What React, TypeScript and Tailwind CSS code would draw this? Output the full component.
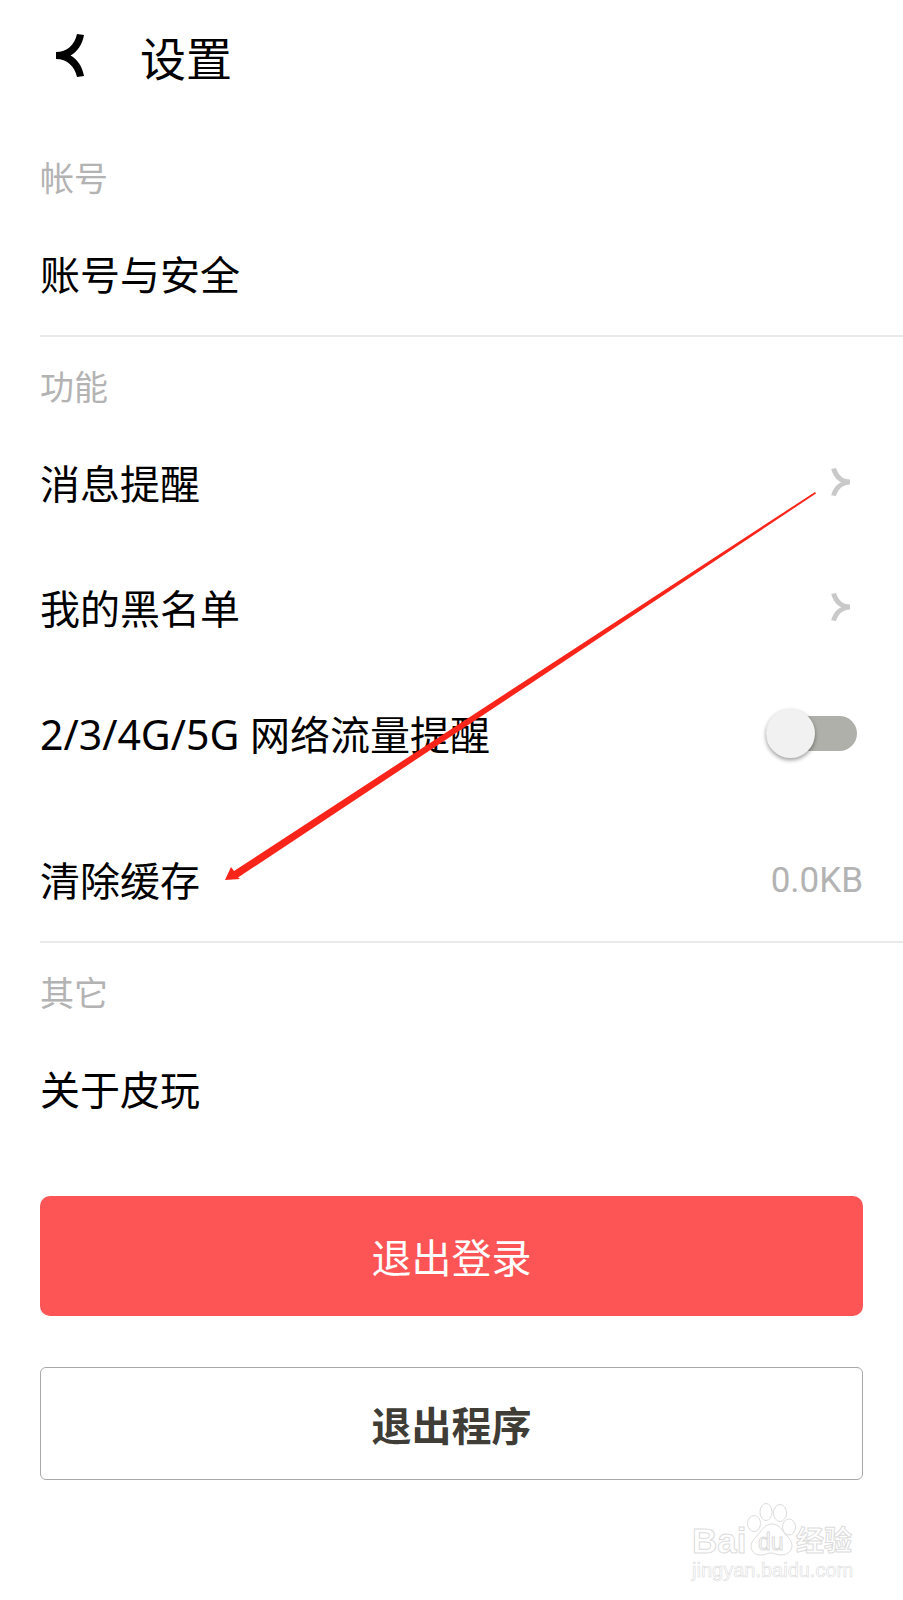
import React, { useState } from "react"

function BackIcon() {
  return (
    <svg width="28" height="44" viewBox="0 0 28 44" fill="#000" aria-hidden="true">
      <path d="M21 0L28 1C26.5 10 21.5 18 14.5 21.5C21.5 25 26.5 33 28 42L21 43C18.5 32 11 25 0 25V18C11 18 18.5 11 21 0Z" />
    </svg>
  )
}

function ArrowIcon() {
  return (
    <svg width="19" height="28" viewBox="0 0 19 28" fill="#c9c9c9" aria-hidden="true">
      <path d="M0.2 1L5 0C7 6.5 11.5 11.6 19 11.6V16.4C11.5 16.4 7 21.5 5 28L0.2 27.2C2 21 5.5 16 10.5 14.2C5.5 12.4 2 7.4 0.2 1Z" />
    </svg>
  )
}

function SectionTitle({ children }: { children: React.ReactNode }) {
  return (
    <h2 className="flex h-[82px] items-center pt-4 text-[34px] leading-none text-[#b3b3b3]">
      {children}
    </h2>
  )
}

const rowClass = "flex h-[125px] w-full items-center justify-between text-left text-[40px] leading-none text-black"

function Row({ label, children }: { label: string; children?: React.ReactNode }) {
  return (
    <button type="button" className={rowClass}>
      <span>{label}</span>
      {children}
    </button>
  )
}

// Guide arrow pointing at the clear cache row
function GuideArrow() {
  return (
    <svg
      className="pointer-events-none absolute top-[492px] left-[225px]"
      width="591"
      height="390"
      viewBox="0 0 591 390"
      fill="#f9241a"
      aria-hidden="true"
    >
      <path d="M590 0L591 1.5L305 192L13 385.5L15 387L0 388L6 375L9 379L303 187Z" />
    </svg>
  )
}

function Watermark() {
  return (
    <svg width="166" height="84" viewBox="0 0 166 84" fill="#fff" stroke="#dcdcdc" strokeWidth="1" className="font-['Liberation_Sans','Noto_Sans_CJK_SC',sans-serif]">
      <text x="2" y="53" fontSize="35" fontWeight="700">Bai</text>
      <ellipse cx="64" cy="23.5" rx="6.5" ry="8" />
      <ellipse cx="76" cy="12" rx="6" ry="8.5" />
      <ellipse cx="90" cy="13" rx="6.5" ry="8.5" />
      <ellipse cx="99" cy="27" rx="6.5" ry="8" />
      <path d="M82 24C90 24 92 31 97 36C106 44 102 55 91 55C86 55 85 53 81 53C77 53 76 55 71 55C60 55 58 44 66 37C72 31 74 24 82 24Z" />
      <text x="68" y="50" fontSize="23">du</text>
      <text x="106" y="51" fontSize="28" fontWeight="700">经验</text>
      <text x="2" y="77" fontSize="20" strokeWidth="0.6">jingyan.baidu.com</text>
    </svg>
  )
}

function App() {
  const [remind, setRemind] = useState(false)

  return (
    <main className="relative min-h-screen overflow-x-hidden bg-white pl-10 font-['Noto_Sans_CJK_SC',sans-serif]">
      <header className="flex h-32 items-center gap-14 pb-4 pl-4">
        <button type="button" aria-label="返回">
          <BackIcon />
        </button>
        <h1 className="text-[46px] leading-none text-black">设置</h1>
      </header>

      <section className="border-b-2 border-[#e9e9e9]">
        <SectionTitle>帐号</SectionTitle>
        <Row label="账号与安全" />
      </section>

      <section className="border-b-2 border-[#e9e9e9]">
        <SectionTitle>功能</SectionTitle>
        <div className="pr-[53px]">
          <Row label="消息提醒">
            <ArrowIcon />
          </Row>
          <Row label="我的黑名单">
            <ArrowIcon />
          </Row>
        </div>
        <div className="pt-0.5 pr-[46px] pb-5">
          <label className={rowClass}>
            <span>
              <span className="font-['Noto_Sans',sans-serif] text-[41px]">2/3/4G/5G </span>
              网络流量提醒
            </span>
            <input
              type="checkbox"
              role="switch"
              checked={remind}
              onChange={(e) => setRemind(e.target.checked)}
              className="flex h-[35px] w-[91px] appearance-none items-center rounded-full bg-[#b0b0ab] before:block before:size-[49px] before:shrink-0 before:rounded-full before:bg-[#f1f1f1] before:shadow-[0_2px_4px_rgba(0,0,0,0.4)] checked:justify-end checked:bg-[#fd5456]"
            />
          </label>
        </div>
        <div className="pr-10">
          <Row label="清除缓存">
            <span className="pt-1 font-[Roboto,sans-serif] text-[35px] text-[#b3b3b3]">0.0KB</span>
          </Row>
        </div>
      </section>

      <section>
        <SectionTitle>其它</SectionTitle>
        <Row label="关于皮玩" />
      </section>

      <div className="mt-[46px] flex flex-col gap-[51px] pr-10 text-[40px] leading-none">
        <button type="button" className="h-[120px] rounded-[10px] bg-[#fd5456] text-white">
          退出登录
        </button>
        <button type="button" className="h-[113px] rounded-md border border-[#a8a8a8] font-bold text-[#403c36]">
          退出程序
        </button>
      </div>

      <footer className="mt-5 flex justify-end pr-[47px]">
        <Watermark />
      </footer>

      <GuideArrow />
    </main>
  )
}

export default App
